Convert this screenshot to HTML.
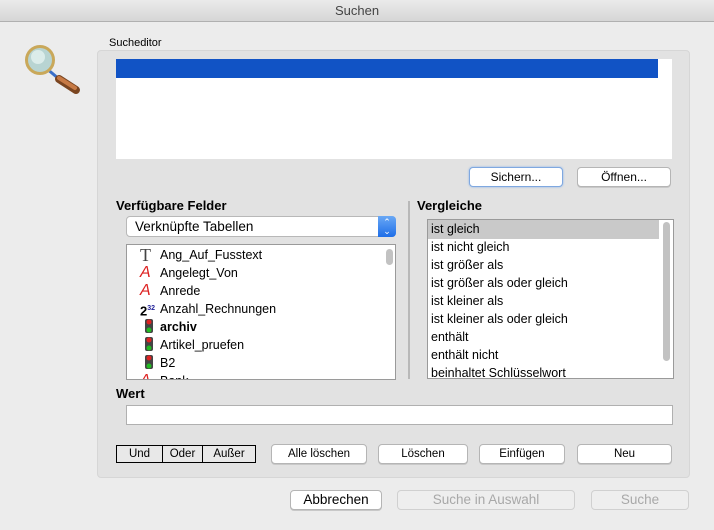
<!DOCTYPE html>
<html><head><meta charset="utf-8"><style>
*{box-sizing:border-box;margin:0;padding:0}
body{width:714px;height:530px;background:#ececec;font-family:"Liberation Sans",sans-serif;font-size:12px;color:#000;position:relative;overflow:hidden}
.a{position:absolute}
.title{left:0;top:0;width:714px;height:22px;background:linear-gradient(#ebebeb,#d6d6d6);border-bottom:1px solid #b0b0b0;text-align:center;line-height:22px;font-size:13px;color:#444}
.grp{left:97px;top:50px;width:593px;height:428px;background:#e2e2e2;border:1px solid #d6d6d6;border-radius:4px}
.btn{position:absolute;background:#fff;border:1px solid #b5b5b5;border-radius:4px;text-align:center;font-size:12px;height:20px;line-height:18px;box-shadow:0 1px 0 #c8c8c8}
.b{font-weight:bold;font-size:13px}
.row{position:absolute;left:0;height:18px;line-height:18px;font-size:12.5px;white-space:nowrap}
.seg{position:absolute;top:445px;height:18px;line-height:16px;border:1px solid #000;background:#e8e8e8;text-align:center;font-size:11.5px}
</style></head><body>
<div class="a title">Suchen</div>
<svg class="a" style="left:24px;top:44px" width="60" height="52" viewBox="0 0 60 52">
<line x1="22" y1="24" x2="35" y2="35" stroke="#3a6fc8" stroke-width="3"/>
<line x1="35" y1="35" x2="52" y2="46" stroke="#7a4520" stroke-width="8" stroke-linecap="round"/>
<line x1="35" y1="34" x2="51" y2="44" stroke="#c77a45" stroke-width="4" stroke-linecap="round"/>
<circle cx="16" cy="16" r="13.5" fill="#b8d4d2" stroke="#c9a85a" stroke-width="3"/>
<circle cx="14" cy="13" r="7" fill="#dbecea"/>
</svg>
<div class="a" style="left:109px;top:37px;font-size:11px">Sucheditor</div>
<div class="a grp"></div>
<div class="a" style="left:116px;top:59px;width:556px;height:100px;background:#fff"></div>
<div class="a" style="left:116px;top:59px;width:542px;height:19px;background:#1153c5"></div>
<div class="btn" style="left:469px;top:167px;width:94px;border-color:#7fa8e0;box-shadow:0 0 2px #8ab4ec">Sichern...</div>
<div class="btn" style="left:577px;top:167px;width:94px">Öffnen...</div>
<div class="a b" style="left:116px;top:198px">Verfügbare Felder</div>
<div class="a" style="left:126px;top:216px;width:270px;height:21px;background:#fff;border:1px solid #b8b8b8;border-radius:4px;font-size:13.5px;line-height:19px;padding-left:8px">Verknüpfte Tabellen</div>
<div class="a" style="left:378px;top:216px;width:18px;height:21px;background:linear-gradient(#6aa8f5,#1e6ee8);border-radius:0 4px 4px 0;color:#fff;font-size:9px;line-height:9px;text-align:center;padding-top:2px">⌃<br>⌄</div>
<div class="a" style="left:126px;top:244px;width:270px;height:136px;background:#fff;border:1px solid #9a9a9a;overflow:hidden">
<div class="a" style="left:259px;top:4px;width:7px;height:16px;background:#c2c2c2;border-radius:4px"></div>
<div class="row" style="top:1px;left:13px"><span style="font-family:'Liberation Serif';font-size:18px;color:#444">T</span></div>
<div class="row" style="top:19px;left:13px;color:#d22;font-size:16px;font-style:italic">A</div>
<div class="row" style="top:37px;left:13px;color:#d22;font-size:16px;font-style:italic">A</div>
<div class="row" style="top:55px;left:13px;font-weight:bold;font-size:13px">2<sup style="font-size:7px;color:#229">32</sup></div>
<div class="row" style="top:73px;left:17px;width:10px"><svg width="10" height="16"><rect x="1" y="1" width="8" height="14" rx="2" fill="#444"/><circle cx="5" cy="4" r="2.5" fill="#d22"/><circle cx="5" cy="12" r="2.5" fill="#2b2"/></svg></div>
<div class="row" style="top:91px;left:17px;width:10px"><svg width="10" height="16"><rect x="1" y="1" width="8" height="14" rx="2" fill="#444"/><circle cx="5" cy="4" r="2.5" fill="#d22"/><circle cx="5" cy="12" r="2.5" fill="#2b2"/></svg></div>
<div class="row" style="top:109px;left:17px;width:10px"><svg width="10" height="16"><rect x="1" y="1" width="8" height="14" rx="2" fill="#444"/><circle cx="5" cy="4" r="2.5" fill="#d22"/><circle cx="5" cy="12" r="2.5" fill="#2b2"/></svg></div>
<div class="row" style="top:127px;left:13px;color:#d22;font-size:16px;font-style:italic">A</div>
<div class="row" style="top:1px;left:33px">Ang_Auf_Fusstext</div>
<div class="row" style="top:19px;left:33px">Angelegt_Von</div>
<div class="row" style="top:37px;left:33px">Anrede</div>
<div class="row" style="top:55px;left:33px">Anzahl_Rechnungen</div>
<div class="row" style="top:73px;left:33px;font-weight:bold">archiv</div>
<div class="row" style="top:91px;left:33px">Artikel_pruefen</div>
<div class="row" style="top:109px;left:33px">B2</div>
<div class="row" style="top:127px;left:33px">Bank</div>
</div>
<div class="a" style="left:408px;top:201px;width:2px;height:178px;background:#b8b8b8"></div>
<div class="a b" style="left:417px;top:198px">Vergleiche</div>
<div class="a" style="left:427px;top:219px;width:247px;height:160px;background:#fff;border:1px solid #9a9a9a;overflow:hidden">
<div class="a" style="left:0;top:0;width:231px;height:19px;background:#c9c9c9"></div>
<div class="a" style="left:235px;top:2px;width:7px;height:139px;background:#c2c2c2;border-radius:4px"></div>
<div class="row" style="top:0;left:3px">ist gleich</div>
<div class="row" style="top:18px;left:3px">ist nicht gleich</div>
<div class="row" style="top:36px;left:3px">ist größer als</div>
<div class="row" style="top:54px;left:3px">ist größer als oder gleich</div>
<div class="row" style="top:72px;left:3px">ist kleiner als</div>
<div class="row" style="top:90px;left:3px">ist kleiner als oder gleich</div>
<div class="row" style="top:108px;left:3px">enthält</div>
<div class="row" style="top:126px;left:3px">enthält nicht</div>
<div class="row" style="top:144px;left:3px">beinhaltet Schlüsselwort</div>
</div>
<div class="a b" style="left:116px;top:386px">Wert</div>
<div class="a" style="left:126px;top:405px;width:547px;height:20px;background:#fff;border:1px solid #b0b0b0"></div>
<div class="seg" style="left:116px;width:47px">Und</div>
<div class="seg" style="left:162px;width:41px">Oder</div>
<div class="seg" style="left:202px;width:54px">Außer</div>
<div class="btn" style="left:271px;top:444px;width:96px;font-size:11.5px">Alle löschen</div>
<div class="btn" style="left:378px;top:444px;width:90px;font-size:11.5px">Löschen</div>
<div class="btn" style="left:479px;top:444px;width:86px;font-size:11.5px">Einfügen</div>
<div class="btn" style="left:577px;top:444px;width:95px;font-size:11.5px">Neu</div>
<div class="btn" style="left:290px;top:490px;width:92px;font-size:13.5px">Abbrechen</div>
<div class="btn" style="left:397px;top:490px;width:178px;font-size:13.5px;background:#eeeeee;color:#a8a8a8;border-color:#d0d0d0;box-shadow:none">Suche in Auswahl</div>
<div class="btn" style="left:591px;top:490px;width:98px;font-size:13.5px;background:#eeeeee;color:#a8a8a8;border-color:#d0d0d0;box-shadow:none">Suche</div>
</body></html>
